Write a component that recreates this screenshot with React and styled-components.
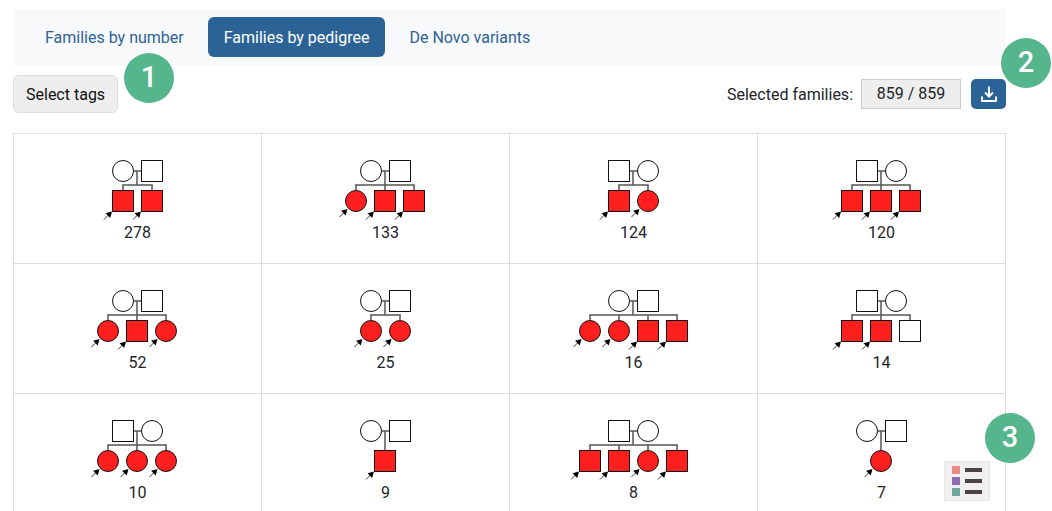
import React from 'react';
import styled, { createGlobalStyle } from 'styled-components';

const families = [
  { count: 278, parents: 'CS', kids: ['S*', 'S*'] },
  { count: 133, parents: 'CS', kids: ['C*', 'S*', 'S*'] },
  { count: 124, parents: 'SC', kids: ['S*', 'C*'] },
  { count: 120, parents: 'SC', kids: ['S*', 'S*', 'S*'] },
  { count: 52, parents: 'CS', kids: ['C*', 'S*', 'C*'] },
  { count: 25, parents: 'CS', kids: ['C*', 'C*'] },
  { count: 16, parents: 'CS', kids: ['C*', 'C*', 'S*', 'S*'] },
  { count: 14, parents: 'SC', kids: ['S*', 'S*', 'S'] },
  { count: 10, parents: 'SC', kids: ['C*', 'C*', 'C*'] },
  { count: 9, parents: 'CS', kids: ['S*'] },
  { count: 8, parents: 'SC', kids: ['S*', 'S*', 'C*', 'S*'] },
  { count: 7, parents: 'CS', kids: ['C*'] },
];

const MID = 75.5;
const SIZE = 22;
const STEP = 29;

function Member({ shape, left, top, fill }) {
  if (shape === 'C') {
    return <circle cx={left + 11} cy={top + 11} r={10.5} fill={fill} stroke="#111" />;
  }
  return <rect x={left + 0.5} y={top + 0.5} width={SIZE - 1} height={SIZE - 1} fill={fill} stroke="#111" />;
}

function Arrow({ left, round }) {
  // circles sit further from the corner of their box, so the arrow moves in
  const x = round ? left + 2.5 : left;
  const y = round ? 49 : 51.5;
  return (
    <g>
      <line x1={x - 8} y1={y + 8} x2={x - 3} y2={y + 3} stroke="#222" strokeWidth="0.9" />
      <polygon points={`${x},${y} ${x - 1.8},${y + 6.4} ${x - 6.4},${y + 1.8}`} fill="#000" />
    </g>
  );
}

function Pedigree({ parents, kids }) {
  const lefts = kids.map((_, i) => Math.floor(MID + (i - (kids.length - 1) / 2) * STEP - 11));
  const centers = lefts.map((l) => l + 11);
  return (
    <PedigreeSvg width="151" height="62" viewBox="0 0 151 62">
      <g stroke="#555" strokeWidth="1.5">
        <line x1="72" x2="79" y1="11" y2="11" />
        {kids.length === 1 ? (
          <line x1="75" x2="75" y1="11" y2="30" />
        ) : (
          <>
            <line x1="75" x2="75" y1="11" y2="25" />
            <line x1={centers[0] - 0.75} x2={centers[centers.length - 1] + 0.75} y1="25" y2="25" />
            {centers.map((c) => (
              <line key={c} x1={c} x2={c} y1="25" y2="30" />
            ))}
          </>
        )}
      </g>
      <Member shape={parents[0]} left={50} top={0} fill="#fff" />
      <Member shape={parents[1]} left={79} top={0} fill="#fff" />
      {kids.map((kid, i) => {
        const affected = kid.endsWith('*');
        return (
          <g key={i}>
            <Member shape={kid[0]} left={lefts[i]} top={30} fill={affected ? '#ff1f1f' : '#fff'} />
            {affected && <Arrow left={lefts[i]} round={kid[0] === 'C'} />}
          </g>
        );
      })}
    </PedigreeSvg>
  );
}

export default function App() {
  return (
    <Page>
      <GlobalStyle />
      <Tabs>
        <Tab>Families by number</Tab>
        <Tab $active>Families by pedigree</Tab>
        <Tab>De Novo variants</Tab>
      </Tabs>
      <Toolbar>
        <TagsButton>Select tags</TagsButton>
        <Selected>
          <SelectedLabel>Selected families:</SelectedLabel>
          <SelectedCount>859 / 859</SelectedCount>
          <DownloadButton aria-label="Download">
            <svg width="16" height="16" viewBox="0 0 16 16" fill="none" stroke="#fff" strokeWidth="2">
              <path d="M8 0.5V10.5" />
              <path d="M4 6.5L8 10.5L12 6.5" />
              <path d="M1 10.5V15H15V10.5" strokeLinejoin="round" />
            </svg>
          </DownloadButton>
        </Selected>
      </Toolbar>
      <Grid>
        {families.map((family) => (
          <Cell key={family.count}>
            <Pedigree parents={family.parents} kids={family.kids} />
            <Count>{family.count}</Count>
          </Cell>
        ))}
      </Grid>
      <Badge $x={124} $y={53}>1</Badge>
      <Badge $x={1001} $y={38}>2</Badge>
      <Badge $x={985} $y={413}>3</Badge>
      <LegendButton aria-label="Legend">
        <svg width="30" height="30" viewBox="0 0 30 30">
          <rect x="0" y="0" width="8" height="8" fill="#e88a88" />
          <rect x="0" y="11" width="8" height="8" fill="#8f6cb3" />
          <rect x="0" y="22" width="8" height="8" fill="#6fa89f" />
          <rect x="13" y="2" width="17" height="4" fill="#4a4444" />
          <rect x="13" y="13" width="17" height="4" fill="#4a4444" />
          <rect x="13" y="24" width="17" height="4" fill="#4a4444" />
        </svg>
      </LegendButton>
    </Page>
  );
}

/// Main wrapper
const GlobalStyle = createGlobalStyle`
  html, body {
    margin: 0;
    padding: 0;
    background: #fff;
  }
  body {
    font-family: Roboto, "Liberation Sans", sans-serif;
    font-size: 16px;
    color: #212529;
  }
`;

const Page = styled.div`
  position: relative;
  box-sizing: border-box;
  width: 1052px;
  height: 511px;
  padding: 9px 0 0 13px;
  overflow: hidden;
`;

/// Tabs
const Tabs = styled.nav`
  box-sizing: border-box;
  display: flex;
  gap: 8px;
  width: 993px;
  height: 56px;
  padding: 8px 16px;
  background: #f8f9fa;
`;

const Tab = styled.a`
  height: 24px;
  padding: 9px 16px 7px;
  line-height: 24px;
  border-radius: 6px;
  color: ${(p) => (p.$active ? '#fff' : '#2c6397')};
  background: ${(p) => (p.$active ? '#2c6397' : 'transparent')};
`;

/// Toolbar
const Toolbar = styled.div`
  display: flex;
  justify-content: space-between;
  align-items: flex-start;
  width: 993px;
  height: 48px;
  margin-top: 10px;
`;

const TagsButton = styled.button`
  box-sizing: border-box;
  height: 38px;
  padding: 0 12px;
  font: inherit;
  color: #111;
  background: #eee;
  border: 1px solid #ddd;
  border-radius: 6px;
`;

const Selected = styled.div`
  display: flex;
  align-items: center;
  height: 38px;
`;

const SelectedLabel = styled.span`
  margin-right: 8px;
`;

const SelectedCount = styled.span`
  box-sizing: border-box;
  width: 100px;
  height: 30px;
  line-height: 28px;
  text-align: center;
  background: #eee;
  border: 1px solid #ccc;
`;

const DownloadButton = styled.button`
  display: flex;
  align-items: center;
  justify-content: center;
  width: 35px;
  height: 30px;
  margin-left: 10px;
  padding: 0;
  background: #2c6397;
  border: none;
  border-radius: 5px;
`;

/// Families grid
const Grid = styled.div`
  display: grid;
  grid-template-columns: repeat(4, 248px);
  grid-auto-rows: 130px;
  width: 993px;
  margin-top: 10px;
  border-top: 1px solid #ddd;
  border-left: 1px solid #ddd;
`;

const Cell = styled.div`
  box-sizing: border-box;
  display: flex;
  flex-direction: column;
  align-items: center;
  padding-top: 26px;
  border-right: 1px solid #ddd;
  border-bottom: 1px solid #ddd;
`;

const PedigreeSvg = styled.svg`
  display: block;
  flex: none;
`;

const Count = styled.div`
  line-height: 20px;
  padding-top: 1px;
`;

/// Overlays
const Badge = styled.div`
  position: absolute;
  left: ${(p) => p.$x}px;
  top: ${(p) => p.$y}px;
  width: 50px;
  height: 50px;
  line-height: 49px;
  text-align: center;
  border-radius: 50%;
  font-size: 29px;
  font-weight: 500;
  color: #fff;
  background: #55b58d;
`;

const LegendButton = styled.button`
  position: absolute;
  left: 944px;
  top: 461px;
  display: flex;
  align-items: center;
  justify-content: center;
  box-sizing: border-box;
  width: 46px;
  height: 40px;
  padding: 0;
  background: #f0f0f0;
  border: 1px solid #e6e6e6;
`;
